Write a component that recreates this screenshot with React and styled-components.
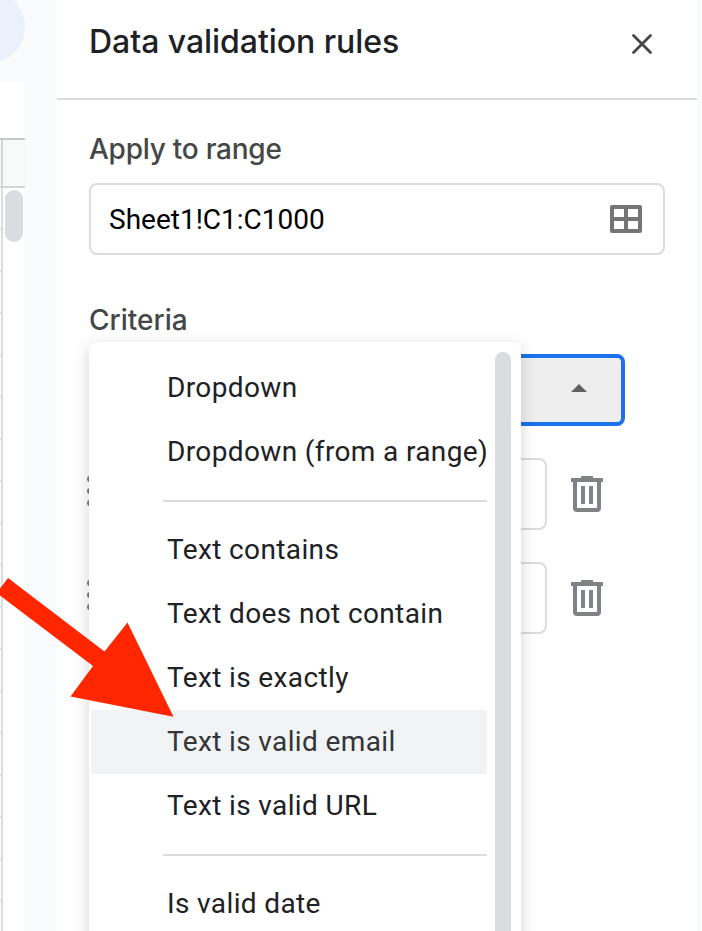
import React from "react";
import styled, { createGlobalStyle } from "styled-components";

const GlobalStyle = createGlobalStyle`
  * { box-sizing: border-box; }
  body { margin: 0; overflow: hidden; background: #f9fbfd; font-family: Roboto, sans-serif; }
`;

const Screen = styled.main`
  position: relative;
  display: flex;
  width: 702px;
  height: 931px;
  overflow: hidden;
  background: #f9fbfd;
`;

const SheetEdge = styled.aside`
  display: flex;
  flex-direction: column;
  width: 25px;
  margin-right: 32px;
  overflow: hidden;
`;

const Toolbar = styled.div`
  display: flex;
  justify-content: flex-end;
  height: 82px;
`;

const RoundButton = styled.div`
  flex: none;
  width: 72px;
  height: 72px;
  margin-top: -9px;
  border-radius: 50%;
  background: #ebf1fb;
`;

const FormulaBar = styled.div`
  height: 56px;
  background: #fff;
`;

const ColumnHeader = styled.div`
  height: 50px;
  border: solid #c6c7c7;
  border-width: 2px 0;
  border-bottom-color: #d5d6d6;
  background: #f8f9f9;
  padding-left: 1px;

  &::before {
    content: "";
    display: block;
    width: 2px;
    height: 100%;
    background: #d5d6d6;
  }
`;

const SheetBody = styled.div`
  display: flex;
  flex: 1;
  gap: 2px;
  background: #fff;
`;

const Cells = styled.div`
  width: 3px;
  border-right: 2px solid #dcddde;
  background: repeating-linear-gradient(#fff 0 40px, #e1e2e3 40px 42px);
`;

const SheetThumb = styled.div`
  width: 18px;
  height: 52px;
  margin-top: 2px;
  border-radius: 9px;
  background: #dadce0;
`;

const Panel = styled.section`
  width: 640px;
  background: #fff;
`;

const Header = styled.header`
  display: flex;
  align-items: center;
  justify-content: space-between;
  height: 100px;
  padding: 0 44px 14px 32px;
  border-bottom: 2px solid #dadcdf;
`;

const Title = styled.h1`
  margin: 0;
  color: #202124;
  font: 500 32px/40px Inter, sans-serif;
  letter-spacing: -0.05px;
  white-space: nowrap;
`;

const CloseIcon = styled.svg`
  width: 22px;
  height: 22px;
  margin-top: 4px;
`;

const Form = styled.div`
  display: flex;
  flex-direction: column;
  padding: 32px 32px 0;
`;

const Label = styled.h2`
  height: 34px;
  margin: 0;
  color: #444746;
  font: 500 28px/34px Inter, sans-serif;
  letter-spacing: ${(p) => p.$spacing || "0"};
  white-space: nowrap;
`;

const RangeField = styled.div`
  display: flex;
  align-items: center;
  justify-content: space-between;
  width: 576px;
  height: 72px;
  margin: 17px 0 48px;
  padding: 0 21px 0 18px;
  border: 2px solid #dadce0;
  border-radius: 8px;
  color: #000;
  font-size: 28px;
`;

const GridIcon = styled.svg`
  width: 32px;
  height: 28px;
`;

const Select = styled.div`
  display: flex;
  align-items: center;
  justify-content: flex-end;
  width: 536px;
  height: 72px;
  margin: 17px 0 32px;
  padding: 0 34px 4px 0;
  border: 4px solid #1a73e8;
  border-radius: 8px;
  background: #eee;
`;

const Caret = styled.svg`
  width: 16px;
  height: 8px;
`;

const OptionRow = styled.div`
  display: flex;
  align-items: center;
  height: 72px;
  margin-bottom: 32px;
  margin-left: -3px;
`;

const DragHandle = styled.svg`
  width: 6px;
  height: 30px;
  margin-bottom: 6px;
`;

const OptionInput = styled.div`
  width: 431px;
  height: 72px;
  margin-left: 24px;
  border: 2px solid #dadce0;
  border-radius: 8px;
`;

const TrashIcon = styled.svg`
  width: 32px;
  height: 36px;
  margin-left: 24px;
`;

const Menu = styled.div`
  position: absolute;
  left: 89px;
  top: 342px;
  display: flex;
  justify-content: space-between;
  width: 432px;
  height: 620px;
  padding: 14px 10px 0 2px;
  border-radius: 8px;
  background: #fff;
  box-shadow: 0 4px 16px rgba(0, 0, 0, 0.17);
`;

const MenuList = styled.div`
  width: 396px;
`;

const MenuItem = styled.div`
  height: 64px;
  padding-left: 76px;
  background: ${(p) => (p.$active ? "#f1f3f4" : "#fff")};
  color: ${(p) => (p.$active ? "#333537" : "#202124")};
  font-size: 28px;
  line-height: 64px;
  letter-spacing: 0.37px;
  white-space: nowrap;
`;

const Divider = styled.div`
  height: 2px;
  margin: 16px 0 16px 72px;
  background: #dadcdf;
`;

const MenuThumb = styled.div`
  width: 16px;
  margin-top: -4px;
  border-radius: 8px;
  background: #dadce0;
`;

const Pointer = styled.svg`
  position: absolute;
  left: 0;
  top: 570px;
  width: 180px;
  height: 155px;
`;

const groups = [
  ["Dropdown", "Dropdown (from a range)"],
  [
    "Text contains",
    "Text does not contain",
    "Text is exactly",
    "Text is valid email",
    "Text is valid URL",
  ],
  ["Is valid date"],
];

function Option() {
  return (
    <OptionRow>
      <DragHandle viewBox="0 0 6 30" fill="#757779">
        <circle cx="4" cy="3" r="3" />
        <circle cx="4" cy="15" r="3" />
        <circle cx="4" cy="27" r="3" />
      </DragHandle>
      <OptionInput />
      <TrashIcon viewBox="0 0 32 36">
        <path
          fill="#808386"
          fillRule="evenodd"
          d="M0 2H10V0H22V2H32V6H30V32Q30 36 26 36H6Q2 36 2 32V6H0ZM6 6V32H26V6ZM10 10H14V28H10ZM18 10H22V28H18Z"
        />
      </TrashIcon>
    </OptionRow>
  );
}

export default function App() {
  return (
    <>
      <GlobalStyle />
      <Screen>
        <SheetEdge>
          <Toolbar>
            <RoundButton />
          </Toolbar>
          <FormulaBar />
          <ColumnHeader />
          <SheetBody>
            <Cells />
            <SheetThumb />
          </SheetBody>
        </SheetEdge>
        <Panel>
          <Header>
            <Title>Data validation rules</Title>
            <CloseIcon viewBox="0 0 22 22">
              <path
                d="M2.5 2.5L19.5 19.5M19.5 2.5L2.5 19.5"
                stroke="#444746"
                strokeWidth="2.8"
                strokeLinecap="round"
              />
            </CloseIcon>
          </Header>
          <Form>
            <Label $spacing="-0.25px">Apply to range</Label>
            <RangeField>
              <span>Sheet1!C1:C1000</span>
              <GridIcon viewBox="0 0 32 28">
                <path
                  fill="#757575"
                  fillRule="evenodd"
                  d="M2 0H30Q32 0 32 2V26Q32 28 30 28H2Q0 28 0 26V2Q0 0 2 0ZM4 4V12H14V4ZM18 4V12H28V4ZM4 16V24H14V16ZM18 16V24H28V16Z"
                />
              </GridIcon>
            </RangeField>
            <Label>Criteria</Label>
            <Select>
              <Caret viewBox="0 0 16 8">
                <path d="M0 8L8 0L16 8Z" fill="#616161" />
              </Caret>
            </Select>
            <Option />
            <Option />
          </Form>
        </Panel>
        <Menu>
          <MenuList>
            {groups.map((items, index) => (
              <React.Fragment key={items[0]}>
                {index > 0 && <Divider />}
                {items.map((item) => (
                  <MenuItem key={item} $active={item === "Text is valid email"}>
                    {item}
                  </MenuItem>
                ))}
              </React.Fragment>
            ))}
          </MenuList>
          <MenuThumb />
        </Menu>
        <Pointer viewBox="0 0 180 155">
          <path
            d="M8 8L104.500 81.500L127.500 52.500L173.500 146.700L70.500 126.500L93 96L0 25.500V18.500Z"
            fill="#ff2600"
          />
        </Pointer>
      </Screen>
    </>
  );
}
